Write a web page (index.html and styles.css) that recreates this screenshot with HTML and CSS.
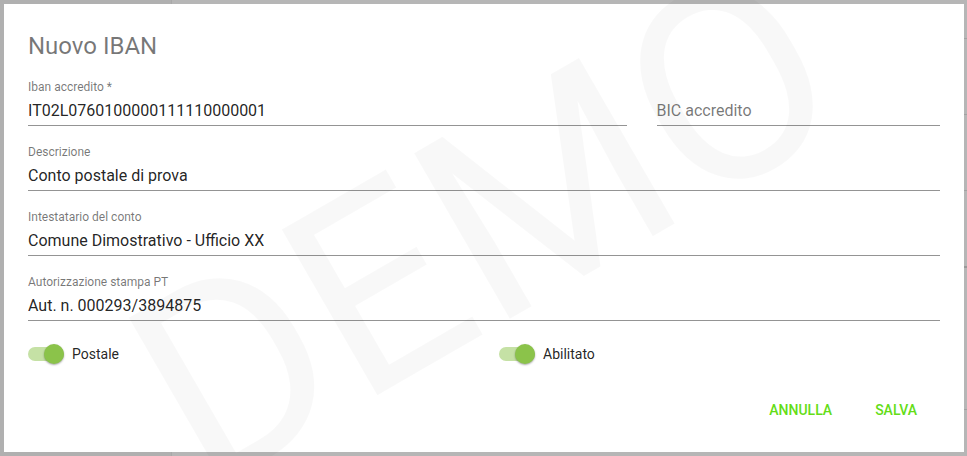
FILE: index.html
```html
<!DOCTYPE html>
<html lang="it">
<head>
<meta charset="utf-8">
<meta name="viewport" content="width=device-width, initial-scale=1">
<title>Nuovo IBAN</title>
<link rel="stylesheet" href="styles.css">
</head>
<body>
<div class="backdrop">
  <form class="dialog">
    <h1 class="title">Nuovo IBAN</h1>
    <div class="fields">
      <div class="row">
        <div class="field">
          <label for="iban">Iban accredito *</label>
          <input id="iban" type="text" value="IT02L0760100000111110000001">
        </div>
        <div class="field field-empty">
          <input id="bic" type="text" placeholder="BIC accredito" aria-label="BIC accredito">
        </div>
      </div>
      <div class="field">
        <label for="descrizione">Descrizione</label>
        <input id="descrizione" type="text" value="Conto postale di prova">
      </div>
      <div class="field">
        <label for="intestatario">Intestatario del conto</label>
        <input id="intestatario" type="text" value="Comune Dimostrativo - Ufficio XX">
      </div>
      <div class="field">
        <label for="autorizzazione">Autorizzazione stampa PT</label>
        <input id="autorizzazione" type="text" value="Aut. n. 000293/3894875">
      </div>
    </div>
    <div class="toggles">
      <label class="toggle"><input type="checkbox" role="switch" checked>Postale</label>
      <label class="toggle"><input type="checkbox" role="switch" checked>Abilitato</label>
    </div>
    <div class="actions">
      <button type="button">ANNULLA</button>
      <button type="submit">SALVA</button>
    </div>
  </form>
  <div class="watermark" aria-hidden="true">DEMO</div>
</div>
</body>
</html>
```

FILE: styles.css
```css
* {
  box-sizing: border-box;
}

body {
  margin: 0;
  font-family: Roboto, "Liberation Sans", sans-serif;
  color: rgba(0, 0, 0, 0.87);
}

.backdrop {
  position: relative;
  overflow: hidden;
  min-height: 100vh;
  padding: 4px 3px 4px 4px;
  background:
    linear-gradient(#a2a2a2, #a2a2a2) right 38px / 3px 1px no-repeat,
    linear-gradient(#a2a2a2, #a2a2a2) right 114px / 3px 1px no-repeat,
    linear-gradient(#a2a2a2, #a2a2a2) right 190px / 3px 1px no-repeat,
    linear-gradient(#999, #999) right 266px / 3px 2px no-repeat,
    linear-gradient(#a2a2a2, #a2a2a2) right 409px / 3px 1px no-repeat,
    linear-gradient(90deg, #b0b0b0 171px, #a9a9a9 171px, #a9a9a9 172px, #b6b6b6 172px);
}

.dialog {
  padding: 24px;
  background: #fff;
}

.title {
  margin: 0 0 15px;
  font-size: 24px;
  line-height: 36px;
  font-weight: 400;
  color: rgba(0, 0, 0, 0.54);
}

.fields {
  display: flex;
  flex-direction: column;
  gap: 18px;
}

.row {
  display: grid;
  grid-template-columns: 19fr 9fr;
  gap: 30px;
}

.field {
  display: flex;
  flex-direction: column;
  min-width: 0;
}

.field-empty {
  justify-content: flex-end;
}

.field label {
  font-size: 12px;
  line-height: 16px;
  color: rgba(0, 0, 0, 0.54);
}

.field input {
  width: 100%;
  height: 31px;
  padding: 0;
  border: 0;
  border-bottom: 1px solid rgba(0, 0, 0, 0.42);
  border-radius: 0;
  outline: 0;
  background: transparent;
  font: inherit;
  font-size: 16px;
  color: inherit;
}

.field input::placeholder {
  color: rgba(0, 0, 0, 0.54);
  opacity: 1;
}

.toggles {
  display: grid;
  grid-template-columns: 1fr 1fr;
  gap: 30px;
  margin-top: 21px;
}

.toggle {
  display: flex;
  align-items: center;
  gap: 8px;
  font-size: 14px;
  line-height: 24px;
}

.toggle input {
  display: flex;
  align-items: center;
  appearance: none;
  width: 36px;
  height: 14px;
  margin: 0;
  border-radius: 8px;
  background: rgba(0, 0, 0, 0.38);
}

.toggle input::before {
  content: "";
  flex: none;
  width: 20px;
  height: 20px;
  border-radius: 50%;
  background: #fafafa;
  box-shadow: 0 1px 2px rgba(0, 0, 0, 0.35);
}

.toggle input:checked {
  justify-content: flex-end;
  background: #c5e1a5;
}

.toggle input:checked::before {
  background: #8bc34a;
}

.actions {
  display: flex;
  justify-content: flex-end;
  gap: 11px;
  margin-top: 26px;
  padding-right: 7px;
}

.actions button {
  height: 36px;
  padding: 0 16px;
  border: 0;
  background: transparent;
  font: inherit;
  font-size: 14px;
  font-weight: 500;
  color: #64dd17;
}

/* Diagonal stamp laid over the whole view */
.watermark {
  position: absolute;
  top: 50%;
  left: 50%;
  transform: translate(-50%, -50%) rotate(-30deg);
  font-size: 269px;
  line-height: 1;
  color: rgba(0, 0, 0, 0.028);
  pointer-events: none;
  user-select: none;
}
```
